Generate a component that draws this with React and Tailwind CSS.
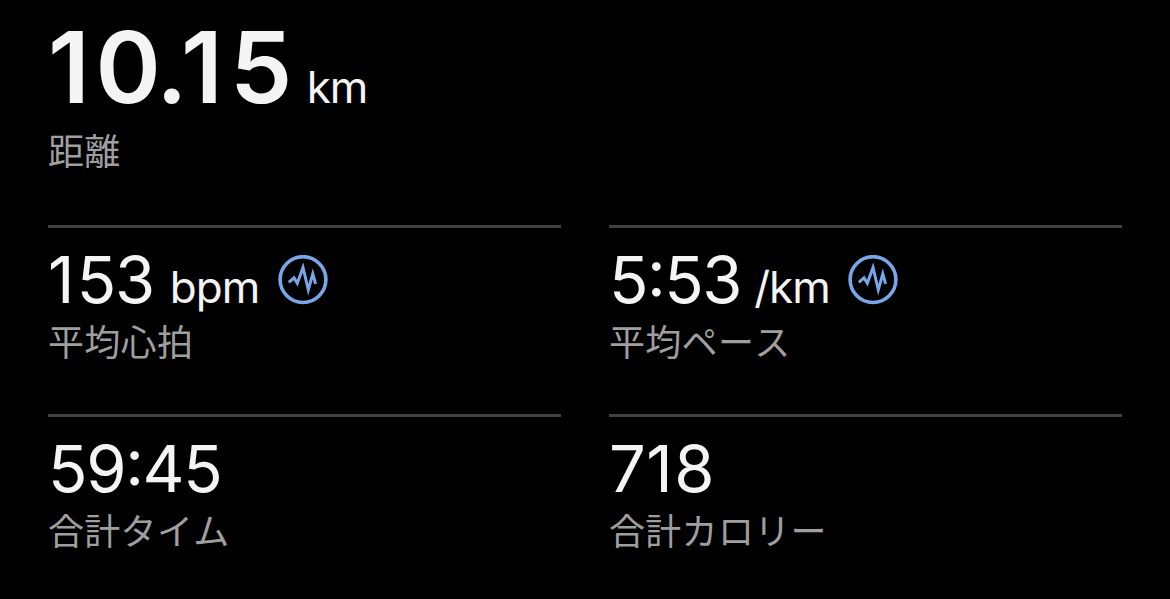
function PulseIcon() {
  return (
    <svg viewBox="0 0 50 50" className="h-[50px] w-[50px] shrink-0" fill="none" stroke="#77a7ea">
      <circle cx="25" cy="24.6" r="22.9" strokeWidth="3.6" />
      <path d="M10.8 27.3 L16 22.8 L19.3 28.2 L25 12.5 L30.3 34.8 L34.8 18.8 L37.6 28.8" strokeWidth="3" strokeMiterlimit="8" />
    </svg>
  );
}

function Label({ children }) {
  return (
    <div className="h-[36px] text-[36px] leading-[36px] tracking-[0.3px] whitespace-nowrap text-[#9f9f9f] [font-kerning:none]">{children}</div>
  );
}

function Metric({ value, unit, unitClass, iconClass, label }) {
  return (
    <section className="h-[189px] border-t-[3px] border-[#404040] pt-[20px]">
      <div className="flex h-[64px] items-start">
        <div className="flex items-baseline leading-[64px] whitespace-nowrap">
          <span className="text-[65px]">{value}</span>
          {unit && <span className={`text-[44px] font-[370] tracking-[-1px] ${unitClass}`}>{unit}</span>}
        </div>
        {iconClass && <div className={`mt-[7px] ${iconClass}`}><PulseIcon /></div>}
      </div>
      <div className="mt-[13px]"><Label>{label}</Label></div>
    </section>
  );
}

function Colon() {
  return <span className="tracking-[-1.5px] [font-feature-settings:'case']">:</span>;
}

export default function App() {
  return (
    <main className="h-[599px] w-[1170px] overflow-hidden bg-black px-[48px] font-['Inter','Noto_Sans_CJK_JP',sans-serif] text-[#f4f4f4]">
      <header className="h-[225px] pt-[17px]">
        <div className="flex h-[100px] items-baseline leading-[100px] whitespace-nowrap">
          <span className="text-[99px] font-[620]">
            <span className="tracking-[5.5px]">1</span>
            <span className="tracking-[-4.7px]">0</span>
            <span className="tracking-[-6.5px]">.</span>
            <span className="tracking-[7px]">1</span>
            <span>5</span>
          </span>
          <span className="ml-[14.5px] text-[44px] font-[370] tracking-[-1px]">km</span>
        </div>
        <div className="mt-[17px]"><Label>距離</Label></div>
      </header>
      <div className="grid grid-cols-2 gap-x-[48px]">
        <Metric
          value={<><span className="tracking-[2.3px]">1</span><span className="tracking-[-1.3px]">53</span></>}
          unit="bpm" unitClass="ml-[16px]" iconClass="ml-[19px]" label="平均心拍"
        />
        <Metric
          value={<><span className="tracking-[-1.6px]">5</span><Colon /><span className="tracking-[-1.3px]">53</span></>}
          unit="/km" unitClass="ml-[13px]" iconClass="ml-[18px]" label="平均ペース"
        />
        <Metric
          value={<><span className="tracking-[-1.3px]">59</span><Colon /><span className="tracking-[-1.3px]">45</span></>}
          label="合計タイム"
        />
        <Metric
          value={<><span className="tracking-[0.5px]">7</span><span className="tracking-[1.5px]">1</span><span>8</span></>}
          label="合計カロリー"
        />
      </div>
    </main>
  );
}
